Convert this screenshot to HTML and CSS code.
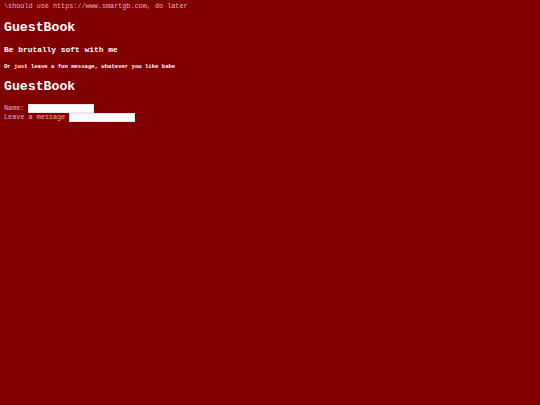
FILE: index.html
```html
<!DOCTYPE html>
<html>
<head>
<meta charset="utf-8">
<link rel="stylesheet" href="styles.css">
</head>
<body class="page">
<div class="note">\should use https://www.smartgb.com, do later</div>
<h1 class="title">GuestBook</h1>
<h3 class="sub">Be brutally soft with me</h3>
<h5 class="small">Or just leave a fun message, whatever you like babe</h5>
<h1 class="title title-form">GuestBook</h1>
<form class="form">
<div class="row"><label class="lbl">Name:&nbsp;</label><input class="field" type="text"></div>
<div class="row"><label class="lbl">Leave a message&nbsp;</label><input class="field" type="text"></div>
</form>
</body>
</html>
```
FILE: styles.css
```css
html {
  background: #800000;
}
.page {
  margin: 3px 4px;
  background: #800000;
  color: #e8b0ba;
  font-family: "Courier New", "Nimbus Mono PS", "FreeMono", "Liberation Mono", monospace;
  font-size: 6.8px;
  line-height: 7.6px;
}
.note {
  height: 8px;
}
.title, .sub, .small {
  color: #ffffff;
  font-weight: bold;
}
.title {
  font-size: 13.2px;
  line-height: 15px;
  margin: 8.5px 0;
}
.title-form {
  margin: 8px 0 10.5px;
}
.sub {
  font-size: 7.9px;
  line-height: 9px;
  margin: 10px 0 0;
}
.small {
  font-size: 5.6px;
  line-height: 6.5px;
  margin: 10.5px 0 8px;
}
.form {
  margin: 0;
}
.row {
  display: flex;
  align-items: center;
  height: 9px;
}
.lbl {
  font-size: 6.8px;
  line-height: 9px;
}
.field {
  width: 66px;
  height: 8.5px;
  box-sizing: border-box;
  border: 0.5px solid #e8e8e8;
  background: #fff;
  padding: 0;
  margin: 0;
}
```
